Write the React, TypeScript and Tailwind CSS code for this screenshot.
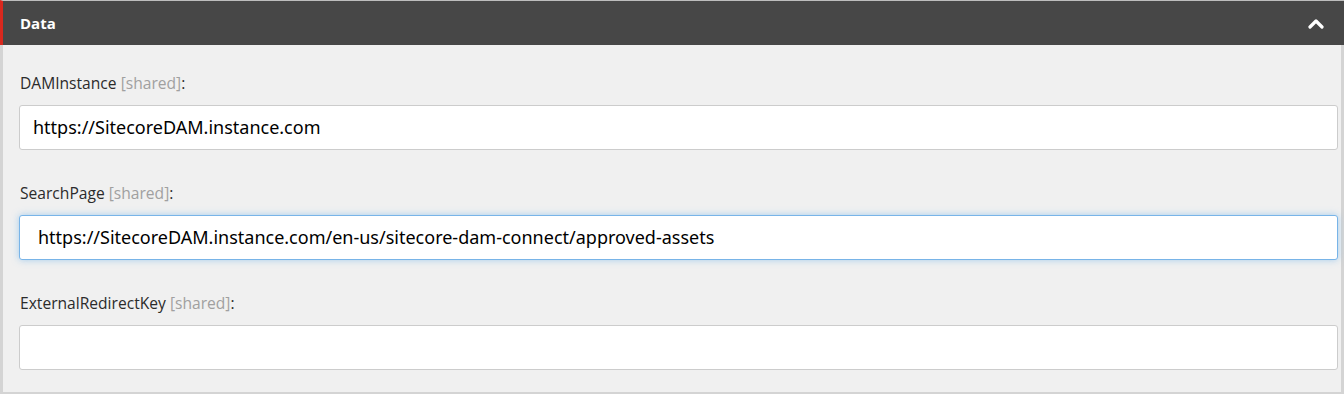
import React from 'react';

const fields = [
  { label: 'DAMInstance', value: 'https://SitecoreDAM.instance.com', focused: false },
  {
    label: 'SearchPage',
    value: 'https://SitecoreDAM.instance.com/en-us/sitecore-dam-connect/approved-assets',
    focused: true,
  },
  { label: 'ExternalRedirectKey', value: '', focused: false },
];

const ChevronUp = () => (
  <svg width="16" height="11" viewBox="0 0 16 11" fill="none">
    <path d="M2 9 L8 3 L14 9" stroke="white" strokeWidth="3.2" strokeLinecap="round" strokeLinejoin="round" />
  </svg>
);

export default function App() {
  return (
    <div className="w-[1344px] h-[394px] bg-[#f0f0f0] font-['Open_Sans',sans-serif] overflow-hidden">
      <div className="h-[45px] bg-[#474747] border-l-[3px] border-[#d9281e] border-t border-t-[#bdbdbd] flex items-center justify-between pl-[17px] pr-[20px]">
        <span className="text-white text-[15px] font-bold">Data</span>
        <ChevronUp />
      </div>
      <div className="h-[349px] border-l-[3px] border-r-[3px] border-b-[2px] border-[#d4d4d4] pt-[28px] pl-[16px] pr-[3px]">
        {fields.map((f) => (
          <div key={f.label} className="mb-[33px]">
            <div className="h-[20px] mb-[12px] text-[15.6px] leading-[20px] text-[#2b2b2b] pl-[1px]">
              {f.label} <span className="text-[#a0a0a0]">[shared]</span>:
            </div>
            <div
              className={`h-[45px] bg-white rounded-[3px] border flex items-center font-['Noto_Sans',sans-serif] text-[18px] text-black ${
                f.focused
                  ? 'border-[#78b4e8] shadow-[0_0_7px_rgba(102,175,233,0.55)] pl-[18px]'
                  : 'border-[#cccccc] pl-[13px]'
              }`}
            >
              {f.value}
            </div>
          </div>
        ))}
      </div>
    </div>
  );
}
